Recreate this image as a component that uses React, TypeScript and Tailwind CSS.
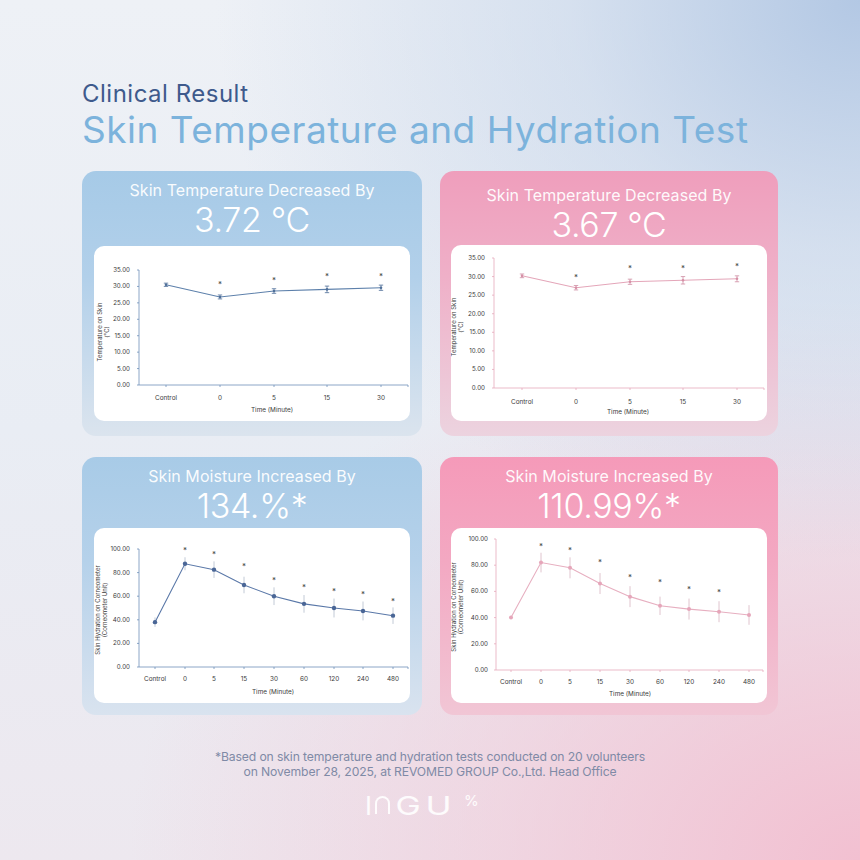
import React from "react";

type Cfg = {
  w: number;
  h: number;
  axisX: number;
  yTop: number;
  yBottom: number;
  max: number;
  step: number;
  labelRight: number;
  axisEnd: number;
  cats: string[];
  xs: number[];
  labelY: number;
  timeY: number;
  timeX: number;
  titleLines: string[];
  titleX: number[];
  titleCY: number;
  data: number[];
  err: number[];
  stars: [number, number][];
  line: string;
  axis: string;
  marker: string;
  errColor: string;
  caps: boolean;
  dotR: number;
  skipErr0?: boolean;
};

function Chart({ c }: { c: Cfg }) {
  const yOf = (v: number) => c.yBottom - (v / c.max) * (c.yBottom - c.yTop);
  const ticks: number[] = [];
  for (let v = 0; v <= c.max + 0.001; v += c.step) ticks.push(v);
  const font = "Inter, 'Liberation Sans', sans-serif";
  const pts = c.data.map((v, i) => `${c.xs[i]},${yOf(v)}`).join(" ");
  return (
    <svg width={c.w} height={c.h} className="block">
      <line x1={c.axisX} y1={c.yTop} x2={c.axisX} y2={c.yBottom} stroke={c.axis} strokeWidth={0.8} />
      {ticks.map((v) => (
        <g key={v}>
          <line x1={c.axisX - 2} y1={yOf(v)} x2={c.axisX} y2={yOf(v)} stroke={c.axis} strokeWidth={0.8} />
          <text x={c.labelRight} y={yOf(v) + 2} fontSize={6.2} fill="#3a3a3a" textAnchor="end" fontFamily={font}>
            {v.toFixed(2)}
          </text>
        </g>
      ))}
      <line x1={c.axisX} y1={c.yBottom} x2={c.axisEnd} y2={c.yBottom} stroke={c.axis} strokeWidth={0.8} />
      {c.xs.map((x, i) => (
        <g key={i}>
          <line x1={x} y1={c.yBottom} x2={x} y2={c.yBottom + 2} stroke={c.axis} strokeWidth={0.8} />
          <text x={x} y={c.labelY + 2} fontSize={6.4} fill="#3a3a3a" textAnchor="middle" fontFamily={font}>
            {c.cats[i]}
          </text>
        </g>
      ))}
      <line x1={c.axisEnd} y1={c.yBottom} x2={c.axisEnd} y2={c.yBottom + 2} stroke={c.axis} strokeWidth={0.8} />
      <text x={c.timeX} y={c.timeY + 2} fontSize={6.4} fill="#3a3a3a" textAnchor="middle" fontFamily={font}>
        Time (Minute)
      </text>
      {c.titleLines.map((t, i) => (
        <text
          key={i}
          transform={`translate(${c.titleX[i]},${c.titleCY}) rotate(-90)`}
          fontSize={6}
          fill="#3a3a3a"
          textAnchor="middle"
          fontFamily={font}
        >
          {t}
        </text>
      ))}
      {c.data.map((v, i) =>
        c.skipErr0 && i === 0 ? null : (
          <g key={i}>
            <line x1={c.xs[i]} y1={yOf(v + c.err[i])} x2={c.xs[i]} y2={yOf(v - c.err[i])} stroke={c.errColor} strokeWidth={0.8} />
            {c.caps && (
              <>
                <line x1={c.xs[i] - 2.2} y1={yOf(v + c.err[i])} x2={c.xs[i] + 2.2} y2={yOf(v + c.err[i])} stroke={c.errColor} strokeWidth={0.8} />
                <line x1={c.xs[i] - 2.2} y1={yOf(v - c.err[i])} x2={c.xs[i] + 2.2} y2={yOf(v - c.err[i])} stroke={c.errColor} strokeWidth={0.8} />
              </>
            )}
          </g>
        )
      )}
      <polyline points={pts} fill="none" stroke={c.line} strokeWidth={1.1} />
      {c.data.map((v, i) => (
        <circle key={i} cx={c.xs[i]} cy={yOf(v)} r={c.dotR} fill={c.marker} />
      ))}
      {c.stars.map(([x, y], i) => (
        <text key={i} x={x} y={y + 4} fontSize={8} fill="#444" textAnchor="middle" fontFamily={font}>
          *
        </text>
      ))}
    </svg>
  );
}

const tempCats = ["Control", "0", "5", "15", "30"];
const hydCats = ["Control", "0", "5", "15", "30", "60", "120", "240", "480"];

const chartTL: Cfg = {
  w: 316,
  h: 175,
  axisX: 45,
  yTop: 24,
  yBottom: 139,
  max: 35,
  step: 5,
  labelRight: 36,
  axisEnd: 314,
  cats: tempCats,
  xs: [72, 126, 180, 233, 287],
  labelY: 152,
  timeY: 164,
  timeX: 178,
  titleLines: ["Temperature on Skin", "(°C)"],
  titleX: [8, 15],
  titleCY: 86,
  data: [30.5, 26.8, 28.6, 29.1, 29.6],
  err: [0.5, 0.6, 0.7, 1.0, 0.8],
  stars: [
    [126, 37],
    [180, 33],
    [233, 29],
    [287, 29],
  ],
  line: "#5d80ab",
  axis: "#6f90b9",
  marker: "#4f6f99",
  errColor: "#4f6f99",
  caps: true,
  dotR: 1.3,
};

const chartTR: Cfg = {
  w: 316,
  h: 176,
  axisX: 43,
  yTop: 13,
  yBottom: 143,
  max: 35,
  step: 5,
  labelRight: 34,
  axisEnd: 313,
  cats: tempCats,
  xs: [71, 125, 179, 232, 286],
  labelY: 157,
  timeY: 167,
  timeX: 177,
  titleLines: ["Temperature on Skin", "(°C)"],
  titleX: [5, 12],
  titleCY: 82,
  data: [30.2, 27.0, 28.6, 29.0, 29.4],
  err: [0.5, 0.6, 0.7, 1.0, 0.8],
  stars: [
    [125, 31],
    [179, 22],
    [232, 22],
    [286, 20],
  ],
  line: "#e4a6b9",
  axis: "#e6a9bb",
  marker: "#d68fa6",
  errColor: "#cf8ea3",
  caps: true,
  dotR: 1.3,
};

const chartBL: Cfg = {
  w: 316,
  h: 175,
  axisX: 45,
  yTop: 21,
  yBottom: 139,
  max: 100,
  step: 20,
  labelRight: 36,
  axisEnd: 314,
  cats: hydCats,
  xs: [61, 91, 120, 150, 180, 210, 240, 269, 299],
  labelY: 151,
  timeY: 164,
  timeX: 179,
  titleLines: ["Skin Hydration on Corneometer", "(Corneometer Unit)"],
  titleX: [6, 13],
  titleCY: 82,
  data: [38, 87.5, 82.5, 69.5, 60, 53.5, 50, 47.5, 43.5],
  err: [4, 5.5, 7, 7, 7.5, 7.5, 8, 8, 7],
  stars: [
    [91, 21],
    [120, 25],
    [150, 37],
    [180, 51],
    [210, 58],
    [240, 62],
    [269, 65],
    [299, 72],
  ],
  line: "#5a78a8",
  axis: "#6f90b9",
  marker: "#4a6696",
  errColor: "#b3bccb",
  caps: false,
  dotR: 2.2,
};

const chartBR: Cfg = {
  w: 316,
  h: 175,
  axisX: 45,
  yTop: 11,
  yBottom: 142,
  max: 100,
  step: 20,
  labelRight: 37,
  axisEnd: 312,
  cats: hydCats,
  xs: [60, 90, 119, 149, 179, 209, 238, 268, 298],
  labelY: 154,
  timeY: 166,
  timeX: 179,
  titleLines: ["Skin Hydration on Corneometer", "(Corneometer Unit)"],
  titleX: [5, 12],
  titleCY: 79,
  data: [40, 82, 78, 66, 56, 49, 46.5, 44.5, 42],
  err: [0, 7.5, 8, 8, 8, 7, 8, 8, 7.5],
  stars: [
    [90, 17],
    [119, 21],
    [149, 33],
    [179, 48],
    [209, 53],
    [238, 60],
    [268, 63],
  ],
  line: "#e7afc0",
  axis: "#e6a9bb",
  marker: "#e6a6ba",
  errColor: "#d8b5c1",
  caps: false,
  dotR: 2,
  skipErr0: true,
};

export default function App() {
  return (
    <div
      className="w-[860px] h-[860px] overflow-hidden bg-[radial-gradient(ellipse_75%_65%_at_100%_0%,#b3c8e4_0%,rgba(190,208,232,0.5)_45%,rgba(200,215,235,0)_100%),radial-gradient(ellipse_85%_65%_at_100%_100%,#f2c0d1_0%,rgba(242,196,212,0.5)_50%,rgba(242,196,212,0)_100%),linear-gradient(180deg,#eef1f6_0%,#e9edf4_50%,#ede8ef_100%)]"
      style={{ fontFamily: "Inter, 'Liberation Sans', sans-serif" }}
    >
      <div className="flex flex-col pl-[82px] pt-[80px]">
        <div className="text-[24px] leading-[28px] text-[#3e5a8c] tracking-[0.5px]">Clinical Result</div>
        <div className="mt-[1px] text-[37px] leading-[41px] text-[#7cb3dc] tracking-[0.5px]">
          Skin Temperature and Hydration Test
        </div>

        <div className="mt-[21px] grid grid-cols-[340px_338px] gap-x-[18px] gap-y-[21px]">
          <div className="h-[265px] rounded-[14px] bg-[linear-gradient(180deg,#a6cae7_0%,#b2d0ea_40%,#dbe4ee_100%)] flex flex-col items-center pt-[9px] px-[12px]">
            <div className="text-[16px] leading-[20px] text-white/95 tracking-[0.05px]">Skin Temperature Decreased By</div>
            <div className="mt-[2px] text-[34px] leading-[36px] text-white font-light tracking-[-0.01em]">3.72 °C</div>
            <div className="mt-[8px] w-[316px] h-[175px] rounded-[10px] bg-white overflow-hidden">
              <Chart c={chartTL} />
            </div>
          </div>

          <div className="h-[265px] rounded-[14px] bg-[linear-gradient(180deg,#ef9ebc_0%,#efb0c8_40%,#ecd3df_100%)] flex flex-col items-center pt-[14px] px-[12px]">
            <div className="text-[16px] leading-[20px] text-white/95 tracking-[0.05px]">Skin Temperature Decreased By</div>
            <div className="mt-[2px] text-[34px] leading-[36px] text-white font-light tracking-[-0.01em]">3.67 °C</div>
            <div className="mt-[2px] w-[316px] h-[176px] rounded-[10px] bg-white overflow-hidden">
              <Chart c={chartTR} />
            </div>
          </div>

          <div className="h-[258px] rounded-[14px] bg-[linear-gradient(180deg,#a8cbe7_0%,#b5d1ea_40%,#d9e3ef_100%)] flex flex-col items-center pt-[9px] px-[12px]">
            <div className="text-[16px] leading-[20px] text-white/95 tracking-[0.05px]">Skin Moisture Increased By</div>
            <div className="mt-[2px] text-[34px] leading-[36px] text-white font-light tracking-[-0.01em]">134.%*</div>
            <div className="mt-[4px] w-[316px] h-[175px] rounded-[10px] bg-white overflow-hidden">
              <Chart c={chartBL} />
            </div>
          </div>

          <div className="h-[258px] rounded-[14px] bg-[linear-gradient(180deg,#f59ab9_0%,#f3a8c2_40%,#f1c6d5_100%)] flex flex-col items-center pt-[9px] px-[12px]">
            <div className="text-[16px] leading-[20px] text-white/95 tracking-[0.05px]">Skin Moisture Increased By</div>
            <div className="mt-[2px] text-[34px] leading-[36px] text-white font-light tracking-[-0.01em]">110.99%*</div>
            <div className="mt-[4px] w-[316px] h-[175px] rounded-[10px] bg-white overflow-hidden">
              <Chart c={chartBR} />
            </div>
          </div>
        </div>
      </div>

      <div className="mt-[34px] flex flex-col items-center text-[12.2px] leading-[15px] text-[#7f8aa6] tracking-[-0.01em]">
        <div>*Based on skin temperature and hydration tests conducted on 20 volunteers</div>
        <div>on November 28, 2025, at REVOMED GROUP Co.,Ltd. Head Office</div>
      </div>

      <div className="mt-[14px] flex items-start pl-[365px] text-white/90 text-[26px] leading-[25px] font-normal">
        <span className="w-[7px] text-center">I</span>
        <span className="ml-[3px] mt-[3px] w-[15px] h-[18px] border-[2.3px] border-b-0 border-white/90 rounded-t-full" />
        <span className="ml-[6px] w-[24px] text-center scale-x-[1.3]">G</span>
        <span className="ml-[7px] w-[23px] text-center scale-x-[1.35]">U</span>
        <span className="ml-[14px] mt-[1px] w-[18px] text-[15px] leading-[14px]">%</span>
      </div>
    </div>
  );
}
